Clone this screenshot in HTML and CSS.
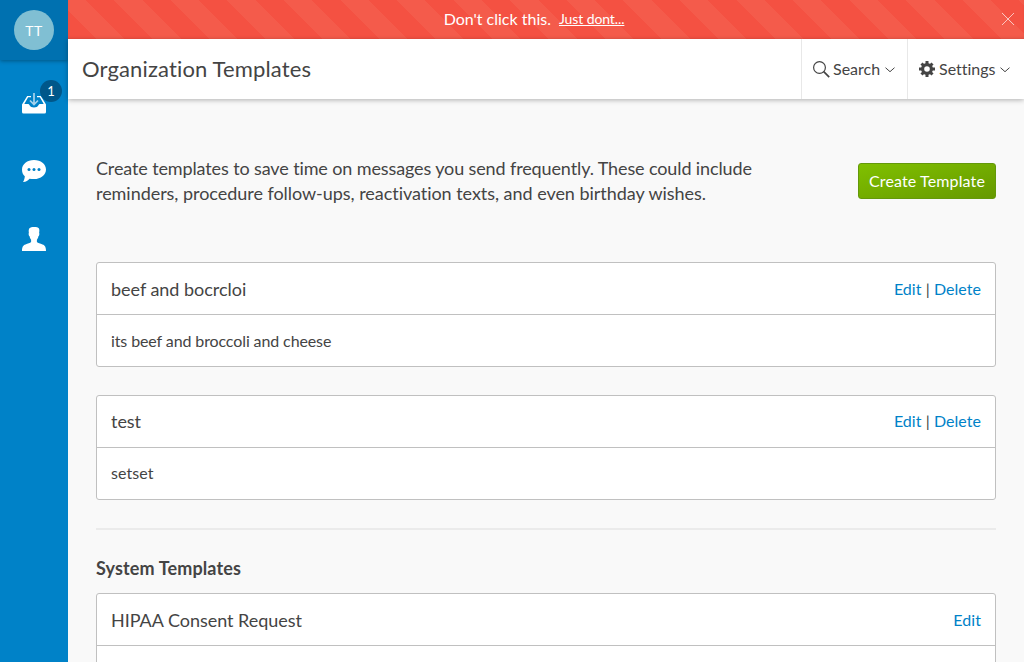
FILE: index.html
```
<!DOCTYPE html>
<html lang="en">
<head>
<meta charset="utf-8">
<title>Organization Templates</title>
<link rel="stylesheet" href="styles.css">
</head>
<body>
<div class="app">
  <nav class="sidebar">
    <div class="account"><span class="avatar">TT</span></div>
    <a class="nav-item">
      <svg width="24" height="22" viewBox="0 0 24 22"><path fill="#fff" d="M0 12.500 5.200 4H9v1.300H6.100L2.300 12h3.200c1.200 0 1.600.5 2.100 1.300.8 1.400 2.200 2.200 4.400 2.200s3.600-.8 4.400-2.200c.5-.8.900-1.300 2.100-1.300h3.200l-3.800-6.700H15V4h3.800L24 12.500V20a1.500 1.500 0 0 1-1.500 1.500h-21A1.500 1.500 0 0 1 0 20z"/><path fill="none" stroke="#a6d3ec" stroke-width="1.700" d="M12 1v11M8 8.500l4 4 4-4"/></svg>
      <span class="badge">1</span>
    </a>
    <a class="nav-item">
      <svg width="24" height="24" viewBox="0 0 24 24"><path fill="#fff" d="M12 1C5.200 1 0 5.200 0 10.500c0 3.200 1 5.200 2.800 6.800-.1 2.300-.7 4-1.800 5.700 3.200-.3 5-1.600 6.500-3.300 1.300.3 3.100.4 4.500.4 6.800 0 12-4.200 12-9.600S18.800 1 12 1z"/><g fill="#0082c8"><circle cx="7" cy="10.500" r="1.500"/><circle cx="12" cy="10.500" r="1.500"/><circle cx="17" cy="10.500" r="1.500"/></g></svg>
    </a>
    <a class="nav-item">
      <svg width="24" height="24" viewBox="0 0 24 24"><path fill="#fff" d="M7.200 1.500C8.500.3 10 0 12 0c2.500 0 4 .3 5 1.500.5 1 .4 3 .1 4.500.6.400.2 2.800-.7 3.300-.3 1.700-.8 2.700-1.500 3.400v2.400c1 1.200 3.300 1.600 5.600 2.400 2.500.9 3.500 2.500 3.500 6.500H0c0-4 1-5.600 3.500-6.500 2.300-.8 4.600-1.200 5.600-2.400v-2.400c-.7-.7-1.200-1.700-1.500-3.400-.9-.5-1.300-2.900-.7-3.300-.3-1.500-.3-3.500.3-4.500z"/></svg>
    </a>
  </nav>
  <div class="page">
    <div class="alert">
      <span>Don't click this.</span><a class="alert-link">Just dont...</a>
      <svg class="alert-close" width="14" height="14" viewBox="0 0 14 14"><path fill="none" stroke="#fff" stroke-opacity=".65" d="M1 1l12 12M13 1 1 13"/></svg>
    </div>
    <header class="topbar">
      <h1 class="page-title">Organization Templates</h1>
      <div class="menu menu-search">
        <svg width="17" height="17" viewBox="0 0 17 17"><g fill="none" stroke="#444"><circle cx="6.500" cy="6.500" r="5.900" stroke-width="1.200"/><path stroke-width="1.700" d="m10.700 10.700 5.500 5.500"/></g></svg>
        <span>Search</span>
        <svg class="caret" width="10" height="6" viewBox="0 0 10 6"><path fill="none" stroke="#444" d="m.5.700 4.500 4 4.500-4"/></svg>
      </div>
      <div class="menu menu-settings">
        <svg width="16" height="16" viewBox="0 0 16 16"><g stroke="#444" stroke-width="3"><path d="M8 0v4M8 12v4M0 8h4M12 8h4M2.500 2.500 5 5M11 11l2.500 2.500M13.500 2.500 11 5M5 11l-2.500 2.500"/><circle cx="8" cy="8" r="4.400" fill="none" stroke-width="3.200"/></g></svg>
        <span>Settings</span>
        <svg class="caret" width="10" height="6" viewBox="0 0 10 6"><path fill="none" stroke="#444" d="m.5.700 4.500 4 4.500-4"/></svg>
      </div>
    </header>
    <main class="content">
      <section class="intro">
        <p class="intro-text">Create templates to save time on messages you send frequently. These could include <span class="intro-detail">reminders, procedure follow-ups, reactivation texts, and even birthday wishes.</span></p>
        <button class="create">Create Template</button>
      </section>
      <article class="card">
        <div class="card-head"><h2 class="card-title">beef and bocrcloi</h2><div class="actions"><a class="link">Edit</a> | <a class="link">Delete</a></div></div>
        <div class="card-body">its beef and broccoli and cheese</div>
      </article>
      <article class="card card-compact">
        <div class="card-head"><h2 class="card-title">test</h2><div class="actions"><a class="link">Edit</a> | <a class="link">Delete</a></div></div>
        <div class="card-body">setset</div>
      </article>
      <hr class="divider">
      <h3 class="section-title">System Templates</h3>
      <article class="card">
        <div class="card-head"><h2 class="card-title">HIPAA Consent Request</h2><div class="actions"><a class="link">Edit</a></div></div>
        <div class="card-body"></div>
      </article>
    </main>
  </div>
</div>
</body>
</html>
```
FILE: styles.css
```
* { box-sizing: border-box; }
body {
  margin: 0;
  background: #f9f9f9;
  color: #444;
  font: 16px/24px Lato, sans-serif;
  font-variant-ligatures: none;
}
h1, h2, h3, p { margin: 0; font-weight: 400; }
svg { display: block; flex: none; }
.app { display: flex; height: 662px; overflow: hidden; }
.sidebar { width: 68px; flex: none; background: #0082c8; }
.account {
  height: 60px;
  display: flex;
  align-items: center;
  justify-content: center;
  background: #0071b0;
  box-shadow: 0 1px 4px rgba(0, 0, 0, .35);
}
.avatar {
  width: 40px;
  height: 40px;
  border-radius: 50%;
  background: #80bfd3;
  color: #fff;
  font-size: 14px;
  letter-spacing: .6px;
  line-height: 42px;
  text-align: center;
}
.nav-item {
  position: relative;
  height: 68px;
  display: flex;
  align-items: center;
  justify-content: center;
  padding-top: 18px;
}
.badge {
  position: absolute;
  left: 40px;
  top: 20px;
  width: 22px;
  height: 22px;
  border-radius: 50%;
  background: #00578a;
  color: #fff;
  font-size: 13px;
  line-height: 23px;
  text-align: center;
}
.page { flex: 1; min-width: 0; }
.alert {
  position: relative;
  height: 39px;
  display: flex;
  justify-content: center;
  align-items: center;
  gap: 8px;
  padding: 0 24px 1px 0;
  color: #fff;
  background: repeating-linear-gradient(45deg, #f45142 0 20px, #f45b4b 20px 40px);
  box-shadow: inset 0 -2px 3px -1px rgba(0, 0, 0, .12);
}
.alert-link { font-size: 14px; letter-spacing: -.1px; text-decoration: underline; }
.alert-close { position: absolute; right: 9px; top: 12px; }
.topbar {
  height: 60px;
  display: flex;
  background: #fff;
  box-shadow: 0 1px 5px rgba(0, 0, 0, .3);
}
.page-title { flex: 1; padding-left: 14px; font-size: 22px; line-height: 60px; letter-spacing: .14px; }
.menu {
  display: flex;
  align-items: center;
  gap: 4px;
  border-left: 1px solid #e8e8e8;
  padding-left: 11px;
}
.menu-search { width: 106px; gap: 3px; }
.menu-search .caret { margin-left: 2px; }
.menu-settings { width: 117px; }
.caret { margin-top: 2px; }
.content { padding: 57px 28px 0; }
.intro {
  height: 106px;
  display: flex;
  align-items: flex-start;
  justify-content: space-between;
}
.intro-text { width: 690px; font-size: 18px; line-height: 25px; letter-spacing: -.12px; }
.intro-detail { letter-spacing: -.04px; }
.create {
  width: 138px;
  height: 36px;
  margin-top: 7px;
  padding: 0 0 2px;
  border: 1px solid #64990a;
  border-radius: 3px;
  background: linear-gradient(to bottom right, #80c000, #669900);
  color: #fff;
  font: 16px Lato, sans-serif;
  letter-spacing: .13px;
}
.card {
  height: 105px;
  margin-bottom: 28px;
  border: 1px solid #c0c0c0;
  border-radius: 3px;
  background: #fff;
}
.card-head, .card-body {
  display: flex;
  align-items: center;
  justify-content: space-between;
  padding: 0 14px;
}
.card-head { height: 52px; border-bottom: 1px solid #c0c0c0; }
.card-body { height: 51px; letter-spacing: -.11px; }
.card-compact .card-head { padding-bottom: 2px; }
.card-compact .card-body { padding-bottom: 2px; letter-spacing: .05px; }
.card-title { font-size: 18px; letter-spacing: -.03px; }
.actions { letter-spacing: .05px; }
.link { color: #0082c8; }
.divider { height: 2px; margin: 0 0 25px; border: 0; background: #ebebeb; }
.section-title { height: 38px; font-size: 18px; font-weight: 700; line-height: 26px; letter-spacing: .13px; }
```
